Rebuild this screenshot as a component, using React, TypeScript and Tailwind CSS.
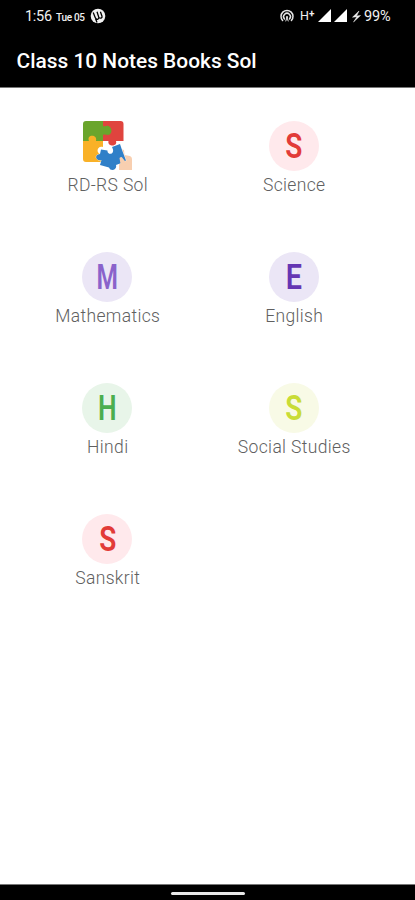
type Subject = {
  name: string
  letter?: string
  circle?: string
  scale?: string
}

const subjects: Subject[] = [
  { name: 'RD-RS Sol' },
  { name: 'Science', letter: 'S', circle: 'bg-[#ffe9ec] text-[#e23b38]', scale: 'scale-x-[0.8]' },
  { name: 'Mathematics', letter: 'M', circle: 'bg-[#ebe6f6] text-[#8a63cb]', scale: 'scale-x-[0.7]' },
  { name: 'English', letter: 'E', circle: 'bg-[#ebe6f6] text-[#6536b3]', scale: 'scale-x-[0.82]' },
  { name: 'Hindi', letter: 'H', circle: 'bg-[#e8f5e9] text-[#4bae4f]', scale: 'scale-x-75' },
  { name: 'Social Studies', letter: 'S', circle: 'bg-[#f8fae6] text-[#c9dc36]', scale: 'scale-x-[0.8]' },
  { name: 'Sanskrit', letter: 'S', circle: 'bg-[#ffe9ec] text-[#e23b38]', scale: 'scale-x-[0.8]' },
]

function PuzzleIcon() {
  return (
    <svg viewBox="0 0 50 50" className="h-[50px] w-[50px]">
      <path d="M20 0h18.500q3 0 3 3v17H34c2 6-9 6-7.500 0H20z" fill="#e0443e" />
      <path d="M4 0h17v5c3 1 4-2 7 1s1 8-2 8c-2 0-3-1-5 0v6H1V3q0-3 3-3z" fill="#6aa52c" />
      <path d="M1 20h6c-3-7 9-7 7 0h7v6c-6-2-8 7-1 7v8H4q-3 0-3-3z" fill="#f9b127" />
      <path d="M37 33l2-5 3 1 .500 5 5.500 1q2 1 2 3v11H37z" fill="#f8cfb0" />
      <path
        d="M19 28.500l6.500 1c-.5 4 5 4.500 5.500 1 .5-2-.5-3-1-4.500L38 23l2 6 4 10.500-6 3-4 1.500c1.500 5-5.500 7-7 2.500l-9-2.500 1.500-5c-6 1.500-7.500-5.500-1.500-6z"
        fill="#3080c8"
        stroke="#fff"
        strokeWidth=".8"
        paintOrder="stroke"
      />
      <path d="M37.500 37q2-2 3 0l4 5-1 5-5-4z" fill="#f8cfb0" />
    </svg>
  )
}

function TorrentIcon() {
  return (
    <svg viewBox="0 0 16 16" className="h-4 w-4">
      <circle cx="8" cy="8" r="7.300" fill="#f1f1f1" />
      <path
        d="M3.200 4.600l2 5c1 2.500 4 2 3.600-.2L7 3.800M8.800 9.400c1.500 1.500 3.700.7 3.200-1.200l-1.600-4.500M5.500 10.500l1.500 4"
        fill="none"
        stroke="#000"
        strokeWidth="1.300"
      />
    </svg>
  )
}

function HotspotIcon() {
  return (
    <svg viewBox="0 0 14 14" className="h-3.5 w-3.5" fill="none" stroke="#e5e5e5" strokeWidth="1.500" strokeLinecap="round">
      <path d="M2.600 11.500a6 6 0 1 1 8.800 0" />
      <path d="M4.500 10a3.400 3.400 0 1 1 5 0" />
      <circle cx="7" cy="8" r="1" fill="#e5e5e5" stroke="none" />
      <path d="M7 8.500L5.800 12M7 8.500L8.200 12" strokeWidth="1" />
    </svg>
  )
}

function SignalIcon() {
  return (
    <svg viewBox="0 0 13 13" className="h-[13px] w-[13px]">
      <path d="M13 0v13H0z" fill="#fff" />
    </svg>
  )
}

function StatusBar() {
  return (
    <div className="flex h-8 items-center justify-between pr-[23px] pl-[25px] text-[#f1f1f1]">
      <div className="flex items-center">
        <span className="w-[31px] pt-px text-[14.5px] tracking-[-0.3px]">1:56</span>
        <span className="w-[34px] pt-0.5 text-[10px] font-medium tracking-[-0.3px] whitespace-nowrap">Tue 05</span>
        <TorrentIcon />
      </div>
      <div className="flex items-center">
        <HotspotIcon />
        <span className="ml-[6px] flex w-[18px] items-start text-[12.5px] leading-[14px]">
          H<span className="-mt-[2px] text-[10px] font-bold">+</span>
        </span>
        <span className="-mt-px flex gap-[3px]">
          <SignalIcon />
          <SignalIcon />
        </span>
        <svg viewBox="0 0 9 13" className="ml-[5px] h-[13px] w-[9px]">
          <path d="M7 1L.5 7.200 5 6.800 1.500 12 8.500 5.500 4.500 6z" fill="#eee" stroke="#eee" strokeWidth=".5" />
        </svg>
        <span className="ml-[3px] w-[28px] pt-px text-[14.5px] tracking-[-0.2px]">99%</span>
      </div>
    </div>
  )
}

function SubjectItem({ subject }: { subject: Subject }) {
  return (
    <div className="flex h-[131px] flex-col items-center">
      {subject.letter ? (
        <div className={`flex h-[50px] w-[50px] items-center justify-center rounded-full ${subject.circle}`}>
          <span className={`pt-px text-[35px] leading-[50px] font-semibold ${subject.scale}`}>{subject.letter}</span>
        </div>
      ) : (
        <PuzzleIcon />
      )}
      <span className="pl-px text-[17.5px] leading-[28px] font-light tracking-[0.35px] whitespace-nowrap text-[#606060]">
        {subject.name}
      </span>
    </div>
  )
}

export default function App() {
  return (
    <div className="flex h-[900px] w-full flex-col bg-white font-['Roboto',sans-serif]">
      <header className="h-[88px] border-b border-[#777] bg-black">
        <StatusBar />
        <h1 className="pl-[16.5px] text-[20.9px] leading-[58px] font-medium text-white">Class 10 Notes Books Sol</h1>
      </header>
      <main className="grid flex-1 grid-cols-2 content-start pt-[33px] pr-7 pl-[14px]">
        {subjects.map((subject) => (
          <SubjectItem key={subject.name} subject={subject} />
        ))}
      </main>
      <footer className="flex h-4 justify-center border-t border-[#777] bg-black pt-[7px]">
        <div className="h-[3px] w-[74px] rounded-full bg-[#e8e8e8]" />
      </footer>
    </div>
  )
}
